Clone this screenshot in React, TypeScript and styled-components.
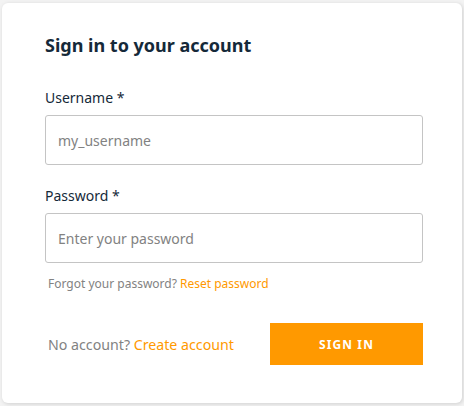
import React from "react";
import styled, { createGlobalStyle } from "styled-components";

const GlobalStyle = createGlobalStyle`
  html, body {
    margin: 0;
    padding: 0;
    background: #f3f3f3;
    font-family: "Noto Sans", "Open Sans", Arial, sans-serif;
  }
  * { box-sizing: border-box; }
`;

const Page = styled.div`
  width: 464px;
  height: 406px;
  padding: 3px 0 0 2px;
`;

const Card = styled.form`
  width: 460px;
  height: 400px;
  background: #fff;
  border-radius: 6px;
  box-shadow: 1px 1px 4px 0 rgba(0, 0, 0, 0.15);
  padding: 30px 39px 0 43px;
  display: flex;
  flex-direction: column;
`;

const Title = styled.h2`
  margin: 0 0 31px 0;
  font-size: 18px;
  line-height: 24px;
  font-weight: 700;
  color: #152939;
`;

const Field = styled.div`
  display: flex;
  flex-direction: column;
  gap: 7px;
  margin-bottom: ${(p: { $mb: number }) => p.$mb}px;
`;

const Label = styled.label`
  font-size: 14px;
  line-height: 20px;
  color: #152939;
`;

const Input = styled.input`
  width: 378px;
  height: 50px;
  padding: 0 12px;
  border: 1px solid #c4c4c4;
  border-radius: 3px;
  font-family: inherit;
  font-size: 14px;
  color: #152939;
  background: #fff;
  outline: none;
  &::placeholder { color: #828282; }
`;

const Hint = styled.div`
  margin: 13px 0 0 3px;
  font-size: 12px;
  line-height: 16px;
  color: #828282;
`;

const Link = styled.a`
  color: #ff9900;
  text-decoration: none;
  cursor: pointer;
`;

const Footer = styled.div`
  margin-top: 31px;
  display: flex;
  align-items: center;
  justify-content: space-between;
`;

const FooterText = styled.span`
  margin-left: 3px;
  font-size: 14.2px;
  color: #828282;
`;

const Button = styled.button`
  width: 153px;
  height: 42px;
  border: none;
  background: #ff9900;
  color: #fff;
  font-family: inherit;
  font-size: 12px;
  font-weight: 700;
  letter-spacing: 1.1px;
  text-transform: uppercase;
  cursor: pointer;
`;

export default function App() {
  return (
    <>
      <GlobalStyle />
      <Page>
        <Card onSubmit={(e) => e.preventDefault()}>
          <Title>Sign in to your account</Title>
          <Field $mb={21}>
            <Label>Username *</Label>
            <Input placeholder="my_username" />
          </Field>
          <Field $mb={0}>
            <Label>Password *</Label>
            <Input type="password" placeholder="Enter your password" />
          </Field>
          <Hint>
            Forgot your password? <Link>Reset password</Link>
          </Hint>
          <Footer>
            <FooterText>
              No account? <Link>Create account</Link>
            </FooterText>
            <Button type="submit">Sign in</Button>
          </Footer>
        </Card>
      </Page>
    </>
  );
}
